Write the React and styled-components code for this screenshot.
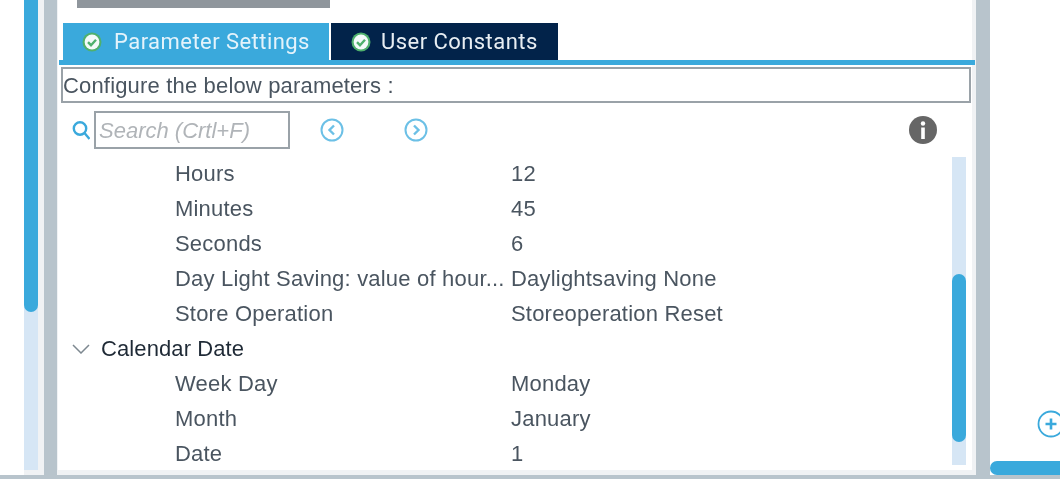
import React from 'react';
import styled, { createGlobalStyle } from 'styled-components';

const GlobalStyle = createGlobalStyle`
  html, body { margin: 0; padding: 0; background: #fff; }
  body { font-family: 'Liberation Sans', Arial, sans-serif; }
`;

const Page = styled.div`
  width: 1060px;
  height: 479px;
  overflow: hidden;
  display: flex;
  flex-direction: column;
  filter: blur(0.35px);
`;

const Columns = styled.div`
  flex: 1;
  min-height: 0;
  display: flex;
`;

const BottomEdge = styled.div`
  height: 4px;
  background: #b8c4cc;
`;

const LeftGutter = styled.div`
  width: 24px;
  background: #fff;
`;

const LeftRail = styled.div`
  width: 20px;
  box-sizing: border-box;
  padding: 0 6px 5px 0;
  background: #f0f2f4;
  display: flex;
`;

const LeftTrack = styled.div`
  flex: 1;
  background: #d6e6f5;
`;

const LeftThumb = styled.div`
  height: 312px;
  background: #3aa9dc;
  border-radius: 0 0 7px 7px;
`;

const Divider = styled.div`
  width: ${p => p.$w}px;
  background: #b8c4cc;
`;

const Panel = styled.div`
  width: 919px;
  box-sizing: border-box;
  background: #f0f2f4;
  padding: 0 4px 5px 1px;
  display: flex;
`;

const PanelInner = styled.div`
  flex: 1;
  min-width: 0;
  background: #fff;
  display: flex;
  flex-direction: column;
`;

const TitleBar = styled.div`
  width: 253px;
  height: 8px;
  margin: 0 0 15px 19px;
  background: #8f969c;
`;

const Tabs = styled.div`
  height: 37px;
  padding-left: 5px;
  display: flex;
  gap: 2px;
`;

const Tab = styled.div`
  width: ${p => p.$w}px;
  box-sizing: border-box;
  padding-left: ${p => p.$active ? 19 : 20}px;
  display: flex;
  align-items: center;
  gap: ${p => p.$active ? 12 : 10}px;
  background: ${p => p.$active ? '#3aa9dc' : '#02234a'};
  color: ${p => p.$active ? '#e4f3fb' : '#e8eef3'};
  font: 22px Roboto, sans-serif;
  letter-spacing: 0.45px;
`;

const TabLine = styled.div`
  height: 5px;
  margin: 0 -3px 0 1px;
  background: #3aa9dc;
`;

const ConfigBox = styled.div`
  height: 36px;
  margin: 2px 1px 0 3px;
  box-sizing: border-box;
  border: 2px solid #9aa2a8;
  padding: 2px 0 0 0;
  display: flex;
  align-items: center;
  color: #4a5560;
  font-size: 22px;
  letter-spacing: 0.17px;
`;

const SearchRow = styled.div`
  height: 38px;
  margin-top: 8px;
  padding-left: 14px;
  display: flex;
  align-items: center;
`;

const SearchInput = styled.div`
  width: 196px;
  height: 38px;
  margin-left: 4px;
  box-sizing: border-box;
  border: 2px solid #9aa2a8;
  padding: 2px 0 0 3px;
  display: flex;
  align-items: center;
  color: #b0b4b8;
  font-size: 22px;
  font-style: italic;
`;

const NavIcon = styled.svg`
  width: 24px;
  height: 24px;
  margin-left: ${p => p.$gap}px;
  flex: none;
`;

const InfoIcon = styled.svg`
  width: 28px;
  height: 28px;
  margin-left: 481px;
  flex: none;
`;

const Body = styled.div`
  flex: 1;
  min-height: 0;
  margin-top: 8px;
  display: flex;
`;

const Rows = styled.div`
  flex: 1;
  min-width: 0;
  overflow: hidden;
`;

const Row = styled.div`
  height: 35px;
  box-sizing: border-box;
  padding-bottom: 2px;
  display: grid;
  grid-template-columns: 453px 1fr;
  align-items: center;
  color: #4a5560;
  font-size: 22px;
  letter-spacing: 0.2px;
  white-space: nowrap;
`;

const Label = styled.div`
  padding-left: 117px;
`;

const GroupRow = styled.div`
  height: 35px;
  box-sizing: border-box;
  padding: 0 0 2px 14px;
  display: flex;
  align-items: center;
  gap: 11px;
  color: #1f2a36;
  font-size: 22px;
  letter-spacing: 0.1px;
`;

const ScrollTrack = styled.div`
  width: 14px;
  height: 308px;
  margin-right: 6px;
  padding-top: 117px;
  box-sizing: border-box;
  background: #d6e6f5;
`;

const ScrollThumb = styled.div`
  height: 168px;
  background: #3aa9dc;
  border-radius: 7px;
`;

const RightPane = styled.div`
  flex: 1;
  min-width: 0;
  display: flex;
  flex-direction: column;
  align-items: flex-end;
  justify-content: flex-end;
`;

const AddIcon = styled.svg`
  width: 28px;
  height: 28px;
  margin: 0 -5px 23px 0;
`;

const RightBar = styled.div`
  width: 70px;
  height: 14px;
  background: #3aa9dc;
  border-radius: 7px 0 0 7px;
`;

const CheckBadge = () => (
  <svg width="20" height="20" viewBox="0 0 20 20">
    <circle cx="10" cy="10" r="9.5" fill="#4fb06d" />
    <circle cx="10" cy="10" r="7.4" fill="#f4fafa" />
    <path d="M6 10.2l3 3 5-5.4" fill="none" stroke="#4fb06d" strokeWidth="2.4" />
  </svg>
);

const params = [
  ['Hours', '12'],
  ['Minutes', '45'],
  ['Seconds', '6'],
  ['Day Light Saving: value of hour...', 'Daylightsaving None'],
  ['Store Operation', 'Storeoperation Reset'],
];

const dateParams = [
  ['Week Day', 'Monday'],
  ['Month', 'January'],
  ['Date', '1'],
];

const ParamRow = ({ label, value }) => (
  <Row>
    <Label>{label}</Label>
    <div>{value}</div>
  </Row>
);

export default function App() {
  return (
    <Page>
      <GlobalStyle />
      <Columns>
        <LeftGutter />
        <LeftRail>
          <LeftTrack>
            <LeftThumb />
          </LeftTrack>
        </LeftRail>
        <Divider $w={13} />
        <Panel>
          <PanelInner>
            <TitleBar />
            <Tabs>
              <Tab $active $w={266}>
                <CheckBadge />
                Parameter Settings
              </Tab>
              <Tab $w={227}>
                <CheckBadge />
                User Constants
              </Tab>
            </Tabs>
            <TabLine />
            <ConfigBox>Configure the below parameters :</ConfigBox>
            <SearchRow>
              <svg width="18" height="20" viewBox="0 0 18 20" fill="none" stroke="#3aa9dc" strokeWidth="2.4">
                <circle cx="8" cy="8.5" r="6.2" />
                <path d="M12.5 13l5 6" />
              </svg>
              <SearchInput>Search (Crtl+F)</SearchInput>
              <NavIcon $gap={30} viewBox="0 0 24 24" fill="none" stroke="#6cc0e6" strokeWidth="2">
                <circle cx="12" cy="12" r="10.5" />
                <path d="M14 7.5L9.5 12l4.5 4.5" strokeWidth="2.4" />
              </NavIcon>
              <NavIcon $gap={60} viewBox="0 0 24 24" fill="none" stroke="#6cc0e6" strokeWidth="2">
                <circle cx="12" cy="12" r="10.5" />
                <path d="M10 7.5l4.5 4.5-4.5 4.5" strokeWidth="2.4" />
              </NavIcon>
              <InfoIcon viewBox="0 0 28 28">
                <circle cx="14" cy="14" r="14" fill="#666" />
                <circle cx="14" cy="7.5" r="2.2" fill="#fff" />
                <rect x="12.2" y="11.5" width="3.6" height="11.5" fill="#fff" />
              </InfoIcon>
            </SearchRow>
            <Body>
              <Rows>
                {params.map(([label, value]) => (
                  <ParamRow key={label} label={label} value={value} />
                ))}
                <GroupRow>
                  <svg width="18" height="10" viewBox="0 0 18 10" fill="none" stroke="#7d8890" strokeWidth="1.5">
                    <path d="M1 1l8 8 8-8" />
                  </svg>
                  Calendar Date
                </GroupRow>
                {dateParams.map(([label, value]) => (
                  <ParamRow key={label} label={label} value={value} />
                ))}
              </Rows>
              <ScrollTrack>
                <ScrollThumb />
              </ScrollTrack>
            </Body>
          </PanelInner>
        </Panel>
        <Divider $w={14} />
        <RightPane>
          <AddIcon viewBox="0 0 28 28" fill="none" stroke="#3aa9dc" strokeWidth="1.8">
            <circle cx="14" cy="14" r="12.5" />
            <path d="M14 8.5v11M8.5 14h11" strokeWidth="2.6" />
          </AddIcon>
          <RightBar />
        </RightPane>
      </Columns>
      <BottomEdge />
    </Page>
  );
}
